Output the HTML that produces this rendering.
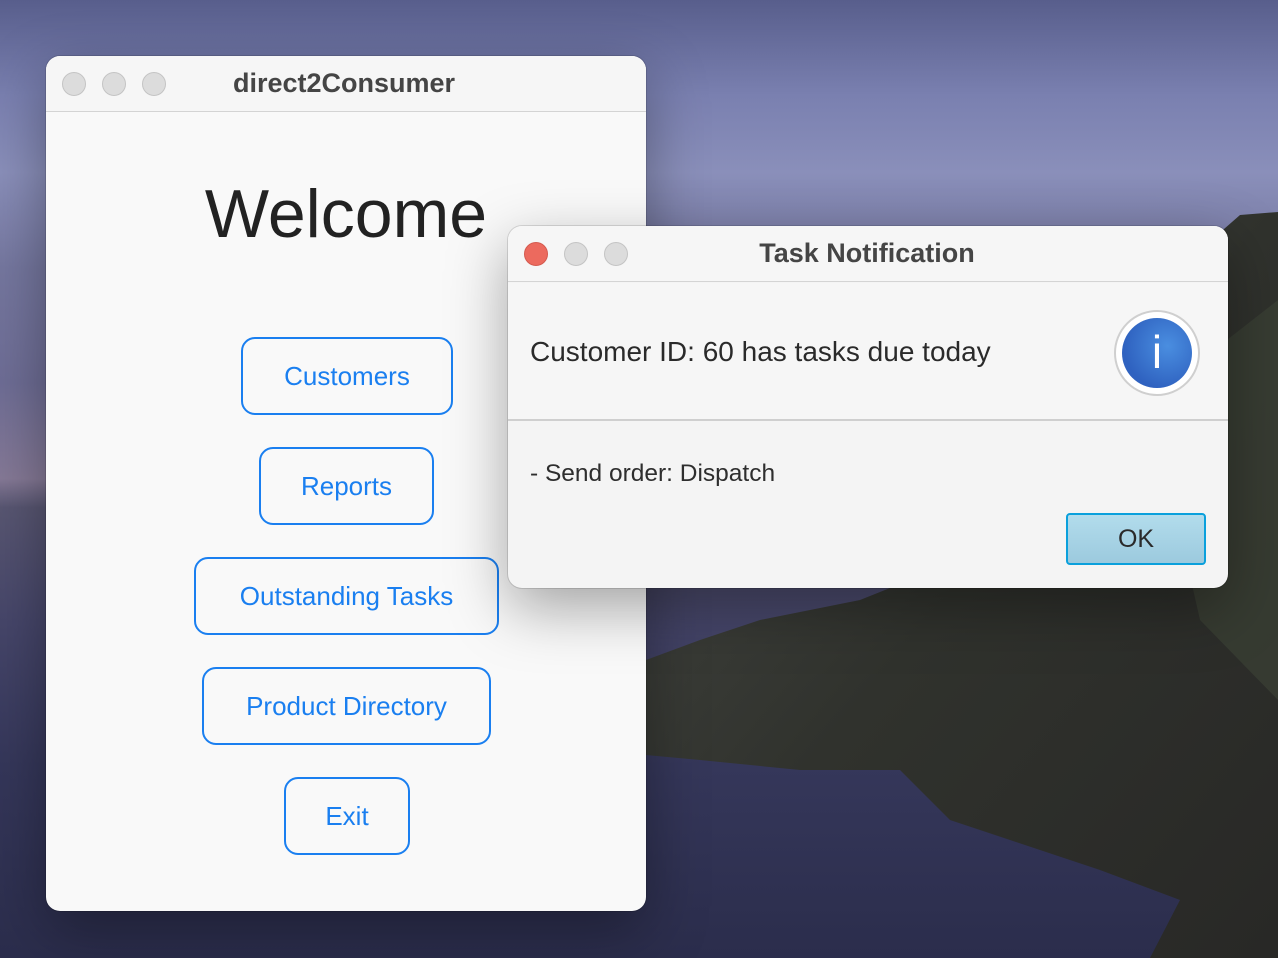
<!DOCTYPE html>
<html><head><meta charset="utf-8"><style>
*{margin:0;padding:0;box-sizing:border-box}
body{width:1278px;height:958px;overflow:hidden;position:relative;font-family:"Liberation Sans",sans-serif;
background:linear-gradient(180deg,#585e8c 0%,#7a80b0 10%,#8a8fba 18%,#75779f 28%,#6e6d95 40%,#857996 50%,#585672 53%,#46466a 65%,#35375a 80%,#2b2d4c 100%)}
.win{position:absolute;background:#f9f9f9;border-radius:14px;overflow:hidden;box-shadow:0 20px 60px rgba(0,0,0,.35),0 0 0 1px rgba(0,0,0,.12)}
.tb{position:absolute;left:0;right:0;top:0;height:56px;background:#f6f6f6;border-bottom:1px solid #d4d4d4}
.tl{position:absolute;width:24px;height:24px;border-radius:50%;background:#dcdcdc;border:1px solid #c4c4c4;top:16px}
.title{position:absolute;top:0;height:56px;line-height:54px;font-weight:bold;font-size:27px;color:#454545;text-align:center}
.btn{position:absolute;border:2px solid #1a7ff0;border-radius:14px;color:#1a7ff0;font-size:26px;display:flex;align-items:center;justify-content:center;background:#f9f9f9}
</style></head><body>
<svg width="1278" height="958" style="position:absolute;left:0;top:0">
<defs><linearGradient id="g" x1="0" y1="0" x2="1" y2="1"><stop offset="0" stop-color="#484a46"/><stop offset="0.5" stop-color="#30322d"/><stop offset="1" stop-color="#282826"/></linearGradient></defs>
<path d="M646 660 L700 640 L760 620 L860 600 L960 560 L1060 480 L1140 360 L1200 250 L1240 215 L1278 212 L1278 958 L1150 958 L1180 900 L1100 870 L1010 840 L950 820 L900 770 L800 770 L700 760 L646 755 Z" fill="url(#g)"/>
<path d="M1150 400 L1278 300 L1278 700 L1200 620 Z" fill="#3e4437" opacity=".6"/>
</svg>
<div class="win" style="left:46px;top:56px;width:600px;height:855px">
<div class="tb"></div>
<div class="tl" style="left:16px"></div><div class="tl" style="left:56px"></div><div class="tl" style="left:96px"></div>
<div class="title" style="left:0;width:596px">direct2Consumer</div>
<div style="position:absolute;top:118px;left:0;width:600px;text-align:center;font-size:68px;color:#222;line-height:80px">Welcome</div>
<div class="btn" style="left:195px;top:281px;width:212px;height:78px">Customers</div>
<div class="btn" style="left:213px;top:391px;width:175px;height:78px">Reports</div>
<div class="btn" style="left:148px;top:501px;width:305px;height:78px">Outstanding Tasks</div>
<div class="btn" style="left:156px;top:611px;width:289px;height:78px">Product Directory</div>
<div class="btn" style="left:238px;top:721px;width:126px;height:78px">Exit</div>
</div>
<div class="win" style="left:508px;top:226px;width:720px;height:362px;background:#f4f4f4">
<div class="tb"></div>
<div class="tl" style="left:16px;background:#ec6a5e;border-color:#d45a4f"></div><div class="tl" style="left:56px"></div><div class="tl" style="left:96px"></div>
<div class="title" style="left:0;width:718px">Task Notification</div>
<div style="position:absolute;top:57px;left:0;right:0;height:138px;background:#f6f6f6;border-bottom:2px solid #cfcfcf"></div>
<div style="position:absolute;left:22px;top:110px;font-size:28px;color:#2a2a2a">Customer ID: 60 has tasks due today</div>
<div style="position:absolute;left:606px;top:84px;width:86px;height:86px;border-radius:50%;background:#fff;border:2px solid #cfcfcf"></div>
<div style="position:absolute;left:614px;top:92px;width:70px;height:70px;border-radius:50%;background:radial-gradient(circle at 65% 40%,#4a8ee0,#2f62c0 70%);color:#fff;font-size:46px;text-align:center;line-height:68px">i</div>
<div style="position:absolute;left:22px;top:234px;font-size:24.5px;color:#2e2e2e">- Send order: Dispatch</div>
<div style="position:absolute;left:558px;top:287px;width:140px;height:52px;border:2px solid #0aa0dc;border-radius:4px;background:linear-gradient(#b2dcec,#9ccade);font-size:25px;color:#2a2a2a;display:flex;align-items:center;justify-content:center">OK</div>
</div>
</body></html>
